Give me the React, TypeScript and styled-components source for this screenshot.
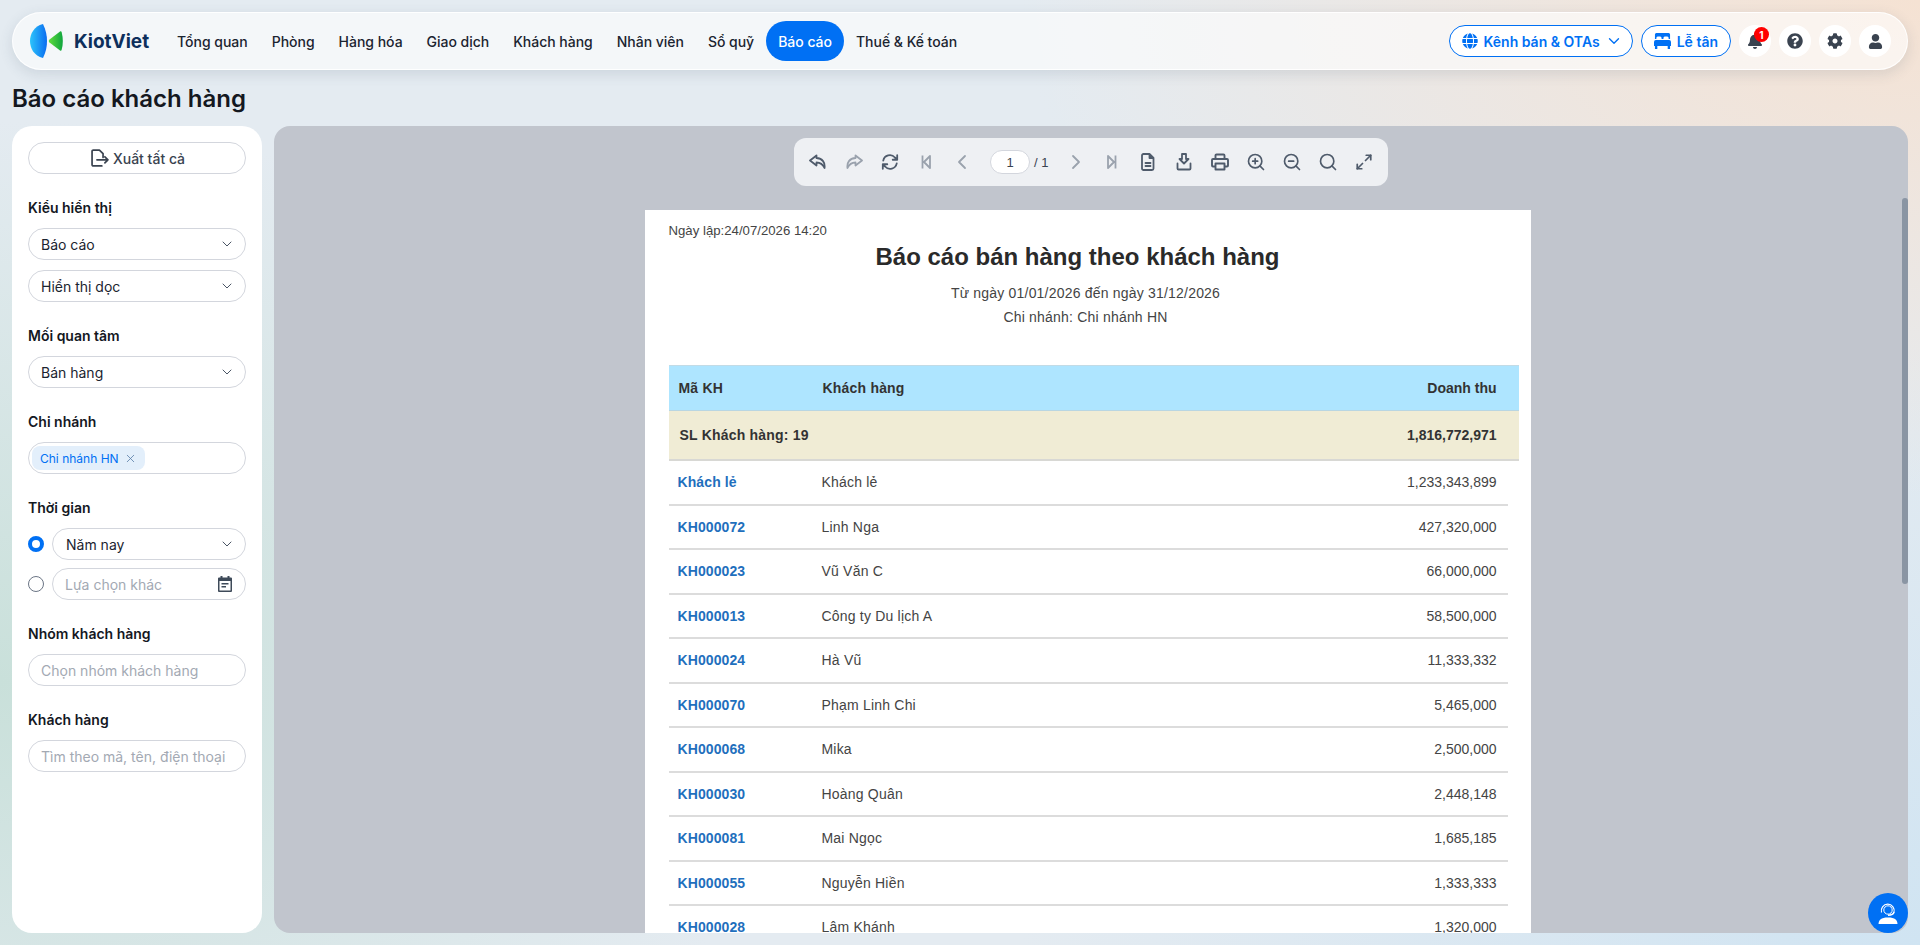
import React from "react";
import styled, {createGlobalStyle} from "styled-components";
import {FaBell, FaCog, FaGlobe, FaQuestionCircle, FaUser} from "react-icons/fa";
import {ChevronDown, ChevronLeft, ChevronRight, Maximize2, Search, X, ZoomIn, ZoomOut} from "lucide-react";

const navItems = ["Tổng quan", "Phòng", "Hàng hóa", "Giao dịch", "Khách hàng", "Nhân viên", "Sổ quỹ", "Báo cáo", "Thuế & Kế toán"];

const customers = [
    ["Khách lẻ", "Khách lẻ", "1,233,343,899"],
    ["KH000072", "Linh Nga", "427,320,000"],
    ["KH000023", "Vũ Văn C", "66,000,000"],
    ["KH000013", "Công ty Du lịch A", "58,500,000"],
    ["KH000024", "Hà Vũ", "11,333,332"],
    ["KH000070", "Phạm Linh Chi", "5,465,000"],
    ["KH000068", "Mika", "2,500,000"],
    ["KH000030", "Hoàng Quân", "2,448,148"],
    ["KH000081", "Mai Ngọc", "1,685,185"],
    ["KH000055", "Nguyễn Hiền", "1,333,333"],
    ["KH000028", "Lâm Khánh", "1,320,000"],
];

const Logo = () => (
    <svg width="34" height="34" viewBox="0 0 34 34">
        <defs>
            <linearGradient id="logoBlue" x1="0" y1="0" x2="1" y2="0">
                <stop offset="0" stopColor="#2cc4fb" />
                <stop offset="1" stopColor="#0a6cf0" />
            </linearGradient>
            <linearGradient id="logoGreen" x1="0" y1="0" x2="1" y2="0">
                <stop offset="0" stopColor="#5fdc3c" />
                <stop offset="1" stopColor="#0fa53e" />
            </linearGradient>
        </defs>
        <path d="M13 0C4 2 0 10 0 17c0 7 4 15 13 17 3-6 4-12 4-17S16 6 13 0z" fill="url(#logoBlue)" />
        <path d="M19.500 15.500 30 7.500c.8-.6 1.300-.3 1.600.4 1.600 6 1.600 12.200 0 18.200-.3.700-.8 1-1.600.4L19.500 18.500c-1-.8-1-2.200 0-3z" fill="url(#logoGreen)" />
    </svg>
);

const BedIcon = () => (
    <svg width="17" height="16" viewBox="0 0 18 16" fill="currentColor" preserveAspectRatio="none">
        <path d="M2.500 0h13A1.500 1.500 0 0 1 17 1.500V6h-1.500V5a1.500 1.500 0 0 0-1.500-1.500h-2.500A1.500 1.500 0 0 0 10 5v1H8V5a1.500 1.500 0 0 0-1.500-1.500H4A1.500 1.500 0 0 0 2.500 5v1H1V1.500A1.500 1.500 0 0 1 2.500 0z" />
        <path d="M2 7h14a2 2 0 0 1 2 2v4h-1v3h-2.500v-3h-11v3H1v-3H0V9a2 2 0 0 1 2-2z" />
    </svg>
);

const Reply = ({flip}: {flip?: boolean}) => (
    <svg width="18" height="18" viewBox="0 0 18 18" fill="none" stroke="currentColor" strokeWidth="1.800" strokeLinejoin="round" style={flip ? {transform: "scaleX(-1)"} : undefined}>
        <path d="M7.500 2.500 1 7.500l6.500 5v-3c3.500 0 6 1 8 5.500.8-5.500-2-9.500-8-10z" />
    </svg>
);

const Refresh = () => (
    <svg width="18" height="18" viewBox="0 0 20 20" fill="none" stroke="currentColor" strokeWidth="2" strokeLinecap="round" strokeLinejoin="round">
        <path d="M2.500 8.500A7.500 7.500 0 0 1 15.500 5L18 7.500M18 2.500v5h-5" />
        <path d="M17.500 11.500A7.500 7.500 0 0 1 4.500 15L2 12.500M2 17.500v-5h5" />
    </svg>
);

const Skip = ({flip}: {flip?: boolean}) => (
    <svg width="18" height="18" viewBox="0 0 18 18" fill="none" stroke="currentColor" strokeWidth="1.800" strokeLinejoin="round" style={flip ? {transform: "scaleX(-1)"} : undefined}>
        <path d="M5.500 2.500v13M13 3 7 9l6 6z" />
    </svg>
);

const DocIcon = () => (
    <svg width="18" height="18" viewBox="0 0 18 18" fill="none" stroke="currentColor" strokeWidth="1.800" strokeLinejoin="round" strokeLinecap="round">
        <path d="M4.500 1h6l4 4v10.500a1.500 1.500 0 0 1-1.500 1.500H4.500A1.500 1.500 0 0 1 3 15.500v-13A1.500 1.500 0 0 1 4.500 1zM10.500 1v4h4M6.500 10h5M6.500 13h5" />
    </svg>
);

const DownloadIcon = () => (
    <svg width="18" height="18" viewBox="0 0 18 18" fill="none" stroke="currentColor" strokeWidth="1.800" strokeLinejoin="round" strokeLinecap="round">
        <path d="M7 1h4v5h2.500L9 10.500 4.500 6H7zM2.500 10.500v5a1 1 0 0 0 1 1h11a1 1 0 0 0 1-1v-5" />
    </svg>
);

const PrintIcon = () => (
    <svg width="18" height="18" viewBox="0 0 18 18" fill="none" stroke="currentColor" strokeWidth="1.900" strokeLinejoin="round">
        <path d="M4.500 6V2.500a1 1 0 0 1 1-1h7a1 1 0 0 1 1 1V6M4.500 13.500H2a1 1 0 0 1-1-1V7a1 1 0 0 1 1-1h14a1 1 0 0 1 1 1v5.500a1 1 0 0 1-1 1h-2.500M4.500 10.500h9v6h-9z" />
    </svg>
);

const ExportIcon = () => (
    <svg width="22" height="22" viewBox="0 0 18 18" fill="none" stroke="currentColor" strokeWidth="1.400" strokeLinejoin="round" strokeLinecap="round">
        <path d="M10.500 15.500H3.500a1 1 0 0 1-1-1V3.500a1 1 0 0 1 1-1h5l3 3v3M6.500 10.500h9M13 8l2.500 2.500L13 13" />
    </svg>
);

const CalendarIcon = () => (
    <svg width="16" height="16" viewBox="0 0 16 16" fill="#3e4a59">
        <path d="M3.500 0h2v1.500h5V0h2v1.500H14a1 1 0 0 1 1 1V15a1 1 0 0 1-1 1H2a1 1 0 0 1-1-1V2.500a1 1 0 0 1 1-1h1.500zM2.500 5v9.500h11V5zM4.500 7h7v1.500h-7zM4.500 10h4.500v1.500H4.500z" />
    </svg>
);

const HeadsetIcon = () => (
    <svg width="24" height="24" viewBox="0 0 24 24" fill="none" stroke="#fff" strokeWidth="1.200">
        <path d="M5.500 11.500a6.500 6.500 0 1 1 12.500 0" />
        <circle cx="12" cy="9" r="4.200" strokeWidth="1" />
        <path d="M18 11c-.5 2.200-2.800 3.200-6 3.200" strokeWidth="1.500" />
        <path d="M2.500 23c0-3.800 2.500-6.500 9.500-6.500s9.500 2.700 9.500 6.500z" fill="#fff" stroke="none" />
    </svg>
);

const SelectField = ({value}: {value: string}) => (
    <Field $trail={10}>
        <span>{value}</span>
        <ChevronDown size={16} strokeWidth={1.5} color="#4a5565" />
    </Field>
);

export default function App() {
    return (
        <Page>
            <GlobalStyle />
            <TopBar>
                <Brand>
                    <Logo />
                    <BrandName>KiotViet</BrandName>
                </Brand>
                <NavList>
                    {navItems.map(item => (
                        <NavItem key={item} $active={item === "Báo cáo"}>{item}</NavItem>
                    ))}
                </NavList>
                <Actions>
                    <OutlineButton>
                        <FaGlobe size={16} />
                        Kênh bán & OTAs
                        <ButtonChevron size={18} strokeWidth={1.8} />
                    </OutlineButton>
                    <OutlineButton>
                        <BedIcon />
                        Lễ tân
                    </OutlineButton>
                    <CircleButton>
                        <FaBell size={16} />
                        <Badge>1</Badge>
                    </CircleButton>
                    <CircleButton><FaQuestionCircle size={16} /></CircleButton>
                    <CircleButton><FaCog size={16} /></CircleButton>
                    <CircleButton><FaUser size={15} /></CircleButton>
                </Actions>
            </TopBar>
            <Title>Báo cáo khách hàng</Title>
            <Content>
                <Sidebar>
                    <ExportButton>
                        <ExportIcon />
                        Xuất tất cả
                    </ExportButton>
                    <Group>
                        <Label>Kiểu hiển thị</Label>
                        <SelectField value="Báo cáo" />
                        <SelectField value="Hiển thị dọc" />
                    </Group>
                    <Group>
                        <Label>Mối quan tâm</Label>
                        <SelectField value="Bán hàng" />
                    </Group>
                    <Group>
                        <Label>Chi nhánh</Label>
                        <ChipField>
                            <Chip>Chi nhánh HN <X size={13} strokeWidth={1.5} color="#5a7fa8" /></Chip>
                        </ChipField>
                    </Group>
                    <Group>
                        <Label>Thời gian</Label>
                        <RadioList>
                            <RadioRow>
                                <Radio $checked />
                                <RadioField $inset={13} $trail={10}>
                                    <span>Năm nay</span>
                                    <ChevronDown size={16} strokeWidth={1.5} color="#4a5565" />
                                </RadioField>
                            </RadioRow>
                            <RadioRow>
                                <Radio />
                                <RadioField $inset={12} $muted>
                                    <span>Lựa chọn khác</span>
                                    <CalendarIcon />
                                </RadioField>
                            </RadioRow>
                        </RadioList>
                    </Group>
                    <Group>
                        <Label>Nhóm khách hàng</Label>
                        <Field $muted>Chọn nhóm khách hàng</Field>
                    </Group>
                    <Group>
                        <Label>Khách hàng</Label>
                        <Field $muted>Tìm theo mã, tên, điện thoại</Field>
                    </Group>
                </Sidebar>
                <Viewer>
                    <ViewerScroll>
                        <Toolbar>
                            <ToolButton><Reply /></ToolButton>
                            <ToolButton $disabled><Reply flip /></ToolButton>
                            <ToolButton><Refresh /></ToolButton>
                            <ToolButton $disabled><Skip /></ToolButton>
                            <ToolButton $disabled><ChevronLeft size={24} strokeWidth={1.8} /></ToolButton>
                            <Pager>
                                <PageInput>1</PageInput>
                                / 1
                            </Pager>
                            <ToolButton $disabled><ChevronRight size={24} strokeWidth={1.8} /></ToolButton>
                            <ToolButton $disabled><Skip flip /></ToolButton>
                            <ToolButton><DocIcon /></ToolButton>
                            <ToolButton><DownloadIcon /></ToolButton>
                            <ToolButton><PrintIcon /></ToolButton>
                            <ToolButton><ZoomIn size={20} strokeWidth={2} /></ToolButton>
                            <ToolButton><ZoomOut size={20} strokeWidth={2} /></ToolButton>
                            <ToolButton><Search size={20} strokeWidth={2} /></ToolButton>
                            <ToolButton><Maximize2 size={18} strokeWidth={2.300} /></ToolButton>
                        </Toolbar>
                        <Sheet>
                            <CreatedAt>Ngày lập:24/07/2026 14:20</CreatedAt>
                            <ReportTitle>Báo cáo bán hàng theo khách hàng</ReportTitle>
                            <ReportSub>Từ ngày 01/01/2026 đến ngày 31/12/2026</ReportSub>
                            <ReportSub>Chi nhánh: Chi nhánh HN</ReportSub>
                            <TableHead>
                                <span>Mã KH</span>
                                <span>Khách hàng</span>
                                <Amount>Doanh thu</Amount>
                            </TableHead>
                            <TableSummary>
                                <span>SL Khách hàng: 19</span>
                                <Amount>1,816,772,971</Amount>
                            </TableSummary>
                            {customers.map(([code, name, total]) => (
                                <TableRow key={code}>
                                    <CodeLink>{code}</CodeLink>
                                    <CustomerName>{name}</CustomerName>
                                    <Amount>{total}</Amount>
                                </TableRow>
                            ))}
                        </Sheet>
                    </ViewerScroll>
                    <ScrollThumb />
                </Viewer>
            </Content>
            <ChatButton><HeadsetIcon /></ChatButton>
        </Page>
    );
}

const GlobalStyle = createGlobalStyle`
  html, body {
    margin: 0;
    height: 100%;
    overflow: hidden;
  }
  body {
    font-family: Inter, "Noto Sans", sans-serif;
    color: #14181f;
  }
`;

const Page = styled.div`
  position: relative;
  width: 1920px;
  height: 945px;
  overflow: hidden;
  display: flex;
  flex-direction: column;
  padding: 12px;
  box-sizing: border-box;
  background:
    radial-gradient(900px 500px at 100% 0%, #f5e2d3 0%, rgba(245, 226, 211, 0) 100%),
    radial-gradient(800px 560px at 0% 72%, #c9e0da 0%, rgba(201, 224, 218, 0) 100%),
    radial-gradient(900px 600px at 100% 100%, #d0e4f2 0%, rgba(208, 228, 242, 0) 100%),
    #e4ebf1;
`;

const TopBar = styled.header`
  height: 58px;
  flex-shrink: 0;
  box-sizing: border-box;
  display: flex;
  align-items: center;
  padding: 0 16px 0 17px;
  border: 1px solid rgba(255, 255, 255, 0.9);
  border-radius: 29px;
  background: rgba(255, 255, 255, 0.6);
  box-shadow: 0 4px 14px rgba(60, 80, 100, 0.14);
`;

const Brand = styled.div`
  display: flex;
  align-items: center;
  gap: 10px;
  margin-right: 16px;
`;

const BrandName = styled.div`
  font-size: 19px;
  font-weight: 700;
  color: #0d2f5c;
`;

const NavList = styled.nav`
  display: flex;
  align-items: center;
  letter-spacing: -0.02px;
`;

const NavItem = styled.div<{$active?: boolean}>`
  height: 40px;
  display: flex;
  align-items: center;
  padding: 0 12px;
  font-size: 14px;
  font-weight: 500;
  border-radius: 20px;
  color: ${p => (p.$active ? "#fff" : "#1b2430")};
  background: ${p => (p.$active ? "#0070f4" : "transparent")};
`;

const Actions = styled.div`
  margin-left: auto;
  display: flex;
  align-items: center;
  gap: 8px;
`;

const OutlineButton = styled.div`
  height: 32px;
  box-sizing: border-box;
  display: flex;
  align-items: center;
  gap: 6px;
  padding: 0 12px;
  border: 1px solid #0070f4;
  border-radius: 16px;
  background: #fff;
  color: #0070f4;
  font-size: 14px;
  font-weight: 600;
`;

const ButtonChevron = styled(ChevronDown)`
  margin: 0 -3px 0 -1px;
`;

const CircleButton = styled.div`
  position: relative;
  width: 32px;
  height: 32px;
  border-radius: 50%;
  background: #fff;
  color: #3a4350;
  display: flex;
  align-items: center;
  justify-content: center;
`;

const Badge = styled.span`
  position: absolute;
  top: 2px;
  right: 2px;
  width: 15px;
  height: 15px;
  border-radius: 50%;
  background: #f00;
  color: #fff;
  font-size: 10px;
  font-weight: 700;
  display: flex;
  align-items: center;
  justify-content: center;
`;

const Title = styled.h1`
  margin: 0;
  height: 56px;
  flex-shrink: 0;
  display: flex;
  align-items: center;
  font-size: 24px;
  font-weight: 600;
  color: #14181f;
`;

const Content = styled.div`
  flex: 1;
  min-height: 0;
  display: flex;
  gap: 12px;
`;

const Sidebar = styled.aside`
  width: 250px;
  flex-shrink: 0;
  box-sizing: border-box;
  padding: 16px;
  background: #fff;
  border-radius: 20px;
  display: flex;
  flex-direction: column;
  gap: 24px;
`;

const fieldBase = `
  height: 32px;
  box-sizing: border-box;
  border: 1px solid #d3d6dd;
  border-radius: 16px;
  background: #fff;
  font-size: 14px;
`;

const ExportButton = styled.div`
  ${fieldBase}
  display: flex;
  align-items: center;
  justify-content: center;
  gap: 2px;
  font-weight: 500;
  color: #3a4350;
`;

const Group = styled.div`
  display: flex;
  flex-direction: column;
  gap: 10px;
`;

const Label = styled.div`
  font-size: 14px;
  line-height: 20px;
  font-weight: 600;
  color: #14181f;
`;

const Field = styled.div<{$muted?: boolean; $trail?: number}>`
  ${fieldBase}
  display: flex;
  align-items: center;
  justify-content: space-between;
  padding: 0 ${p => p.$trail ?? 12}px 0 12px;
  color: ${p => (p.$muted ? "#a3a9b3" : "#1b2430")};
  white-space: nowrap;
`;

const ChipField = styled.div`
  ${fieldBase}
  display: flex;
  align-items: center;
  padding: 0 3px;
`;

const Chip = styled.div`
  height: 24px;
  box-sizing: border-box;
  display: flex;
  align-items: center;
  gap: 5px;
  padding: 0 8px;
  border-radius: 8px;
  background: #e3effb;
  color: #0070f4;
  font-size: 12px;
`;

const RadioList = styled.div`
  display: flex;
  flex-direction: column;
  gap: 8px;
`;

const RadioRow = styled.div`
  display: flex;
  align-items: center;
  gap: 8px;
`;

const Radio = styled.div<{$checked?: boolean}>`
  width: 16px;
  height: 16px;
  box-sizing: border-box;
  flex-shrink: 0;
  border-radius: 50%;
  background: #fff;
  border: ${p => (p.$checked ? "4.500px solid #0070f4" : "1px solid #6b7585")};
`;

const RadioField = styled(Field)<{$inset: number}>`
  flex: 1;
  padding-left: ${p => p.$inset}px;
`;

const Viewer = styled.main`
  position: relative;
  flex: 1;
  min-width: 0;
  background: #c1c5cd;
  border-radius: 16px;
  overflow: hidden;
`;

const ViewerScroll = styled.div`
  height: 100%;
  display: flex;
  flex-direction: column;
  align-items: center;
  padding: 12px 0 0;
  box-sizing: border-box;
  overflow: hidden;
`;

const Toolbar = styled.div`
  flex-shrink: 0;
  height: 48px;
  display: flex;
  align-items: center;
  padding: 0 6px;
  border-radius: 12px;
  background: #eef0f3;
  color: #4a5565;
  box-sizing: border-box;
`;

const ToolButton = styled.div<{$disabled?: boolean}>`
  width: 36px;
  height: 36px;
  display: flex;
  align-items: center;
  justify-content: center;
  color: ${p => (p.$disabled ? "#9aa2ad" : "#4f5b6b")};
`;

const Pager = styled.div`
  display: flex;
  align-items: center;
  gap: 4px;
  width: 78px;
  padding-left: 10px;
  box-sizing: border-box;
  font-family: "Liberation Sans", sans-serif;
  font-size: 13px;
  color: #3a4350;
`;

const PageInput = styled.div`
  width: 40px;
  height: 24px;
  box-sizing: border-box;
  border: 1px solid #d3d6dd;
  border-radius: 12px;
  background: #fff;
  display: flex;
  align-items: center;
  justify-content: center;
`;

const Sheet = styled.div`
  flex-shrink: 0;
  width: 886px;
  margin: 24px 7px 0 0;
  box-sizing: border-box;
  padding: 13px 12px 0 24px;
  background: #fff;
  font-family: "Liberation Sans", Arial, sans-serif;
  font-size: 14px;
  color: #444;
`;

const CreatedAt = styled.div`
  font-size: 13.200px;
  line-height: 16px;
`;

const ReportTitle = styled.div`
  font-size: 24px;
  line-height: 30px;
  font-weight: 700;
  text-align: center;
  margin: 3px 0 9px;
  padding-right: 32px;
  color: #2a2a2a;
`;

const ReportSub = styled.div`
  line-height: 24px;
  text-align: center;
  padding-right: 16px;
  letter-spacing: 0.2px;
`;

const rowGrid = `
  display: grid;
  grid-template-columns: 144px 1fr auto;
  align-items: center;
  box-sizing: border-box;
`;

const TableHead = styled.div`
  ${rowGrid}
  margin-top: 36px;
  height: 46px;
  padding: 0 22px 0 10px;
  background: #aee5ff;
  border-top: 1px solid #c2dbe6;
  border-bottom: 1px solid #b9d6e2;
  font-weight: 700;
  color: #333;
  letter-spacing: 0.2px;
`;

const TableSummary = styled.div`
  display: flex;
  align-items: center;
  justify-content: space-between;
  box-sizing: border-box;
  height: 50px;
  padding: 0 22px 0 11px;
  background: #f0ecd5;
  border-bottom: 2px solid #d8d8d4;
  font-weight: 700;
  color: #333;
  letter-spacing: 0.2px;
`;

const TableRow = styled.div`
  ${rowGrid}
  height: 44.500px;
  margin-right: 11px;
  padding: 0 11px 0 9px;
  border-bottom: 2px solid #dcdcdc;
`;

const CodeLink = styled.span`
  color: #1f6fbd;
  font-weight: 700;
  letter-spacing: 0.1px;
`;

const CustomerName = styled.span`
  letter-spacing: 0.2px;
`;

const Amount = styled.span`
  text-align: right;
  letter-spacing: 0;
`;

const ScrollThumb = styled.div`
  position: absolute;
  top: 72px;
  right: 0;
  width: 6px;
  height: 386px;
  background: #8a95a3;
  border-radius: 3px;
`;

const ChatButton = styled.div`
  position: absolute;
  right: 12px;
  bottom: 12px;
  width: 40px;
  height: 40px;
  border-radius: 50%;
  background: #0070f4;
  display: flex;
  align-items: center;
  justify-content: center;
`;
